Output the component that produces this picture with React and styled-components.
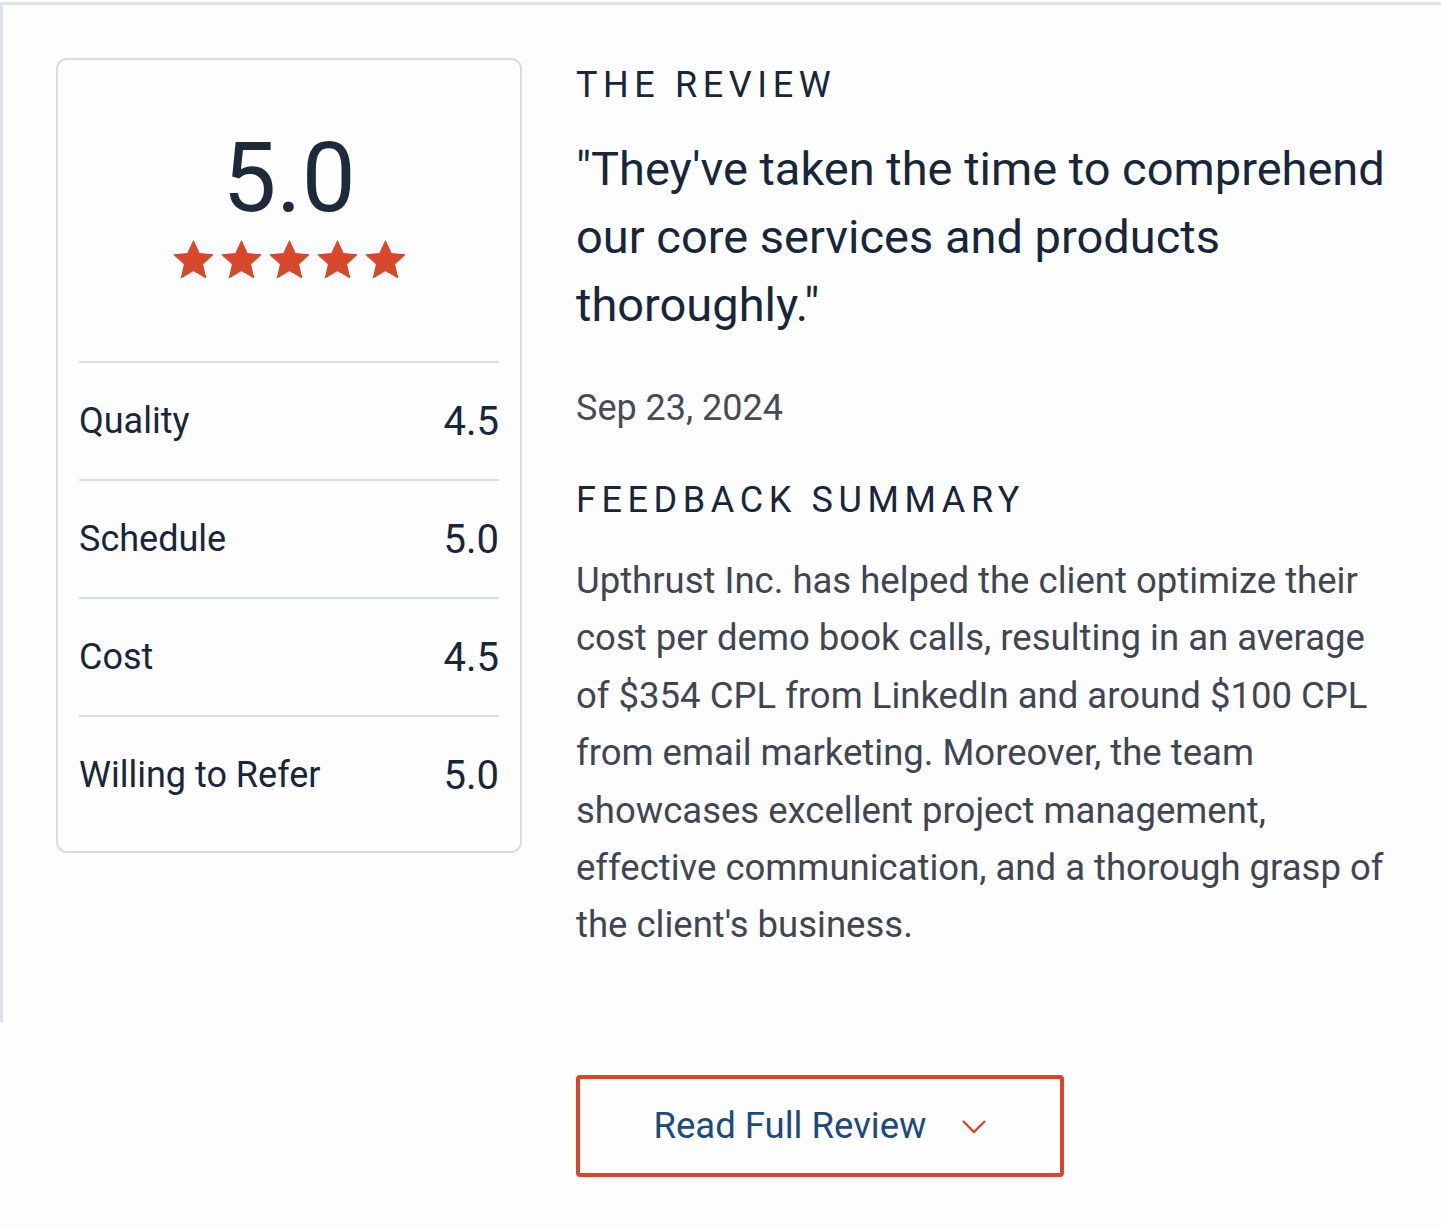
import React from 'react';
import styled, { createGlobalStyle } from 'styled-components';

const GlobalStyle = createGlobalStyle`
  body {
    margin: 0;
    background: #fdfdfe;
    font-family: Roboto, "Liberation Sans", Arial, sans-serif;
    color: #17263a;
  }
`;

const Page = styled.div`
  padding-top: 2px;
  width: 1441px;
  height: 1226px;
  box-sizing: border-box;
  overflow: hidden;
`;

const Panel = styled.section`
  display: grid;
  grid-template-columns: 466px 826px;
  column-gap: 54px;
  align-items: start;
  border-top: 3px solid #dce3eb;
  border-left: 3px solid #dce3eb;
  padding: 53px 0 68px 53px;
`;

const Card = styled.div`
  border: 2px solid #d3dde8;
  border-radius: 11px;
  padding: 0 21px 18px;
  background: #fdfdfe;
`;

const Overall = styled.div`
  display: flex;
  flex-direction: column;
  align-items: center;
  padding: 69px 0 79px;
`;

const Score = styled.div`
  font-size: 96px;
  line-height: 98px;
  font-weight: 400;
  color: #1c2a3b;
`;

const Stars = styled.div`
  display: flex;
  gap: 3px;
  margin-top: 11px;

  svg {
    width: 45px;
    height: 44px;
    display: block;
  }
`;

const Row = styled.div`
  display: flex;
  align-items: center;
  justify-content: space-between;
  height: 116px;
  border-top: 2px solid #d5dfe9;
`;

const Label = styled.span`
  font-size: 36px;
  color: #17263a;
`;

const Value = styled.span`
  font-size: 40px;
  color: #17263a;
`;

const Column = styled.div`
  display: flex;
  flex-direction: column;
  padding-top: 5px;
`;

const Eyebrow = styled.h3`
  margin: ${({ $top }) => $top || 0}px 0 0;
  font-size: 36px;
  line-height: 44px;
  font-weight: 400;
  letter-spacing: 5.6px;
  text-transform: uppercase;
  color: #17263a;
`;

const Quote = styled.p`
  margin: 28px 0 0;
  font-size: 47px;
  line-height: 68px;
  color: #17263a;
`;

const DateLine = styled.p`
  margin: 45px 0 0;
  font-size: 36px;
  line-height: 48px;
  color: #464c55;
`;

const Summary = styled.p`
  margin: 30px 0 0;
  font-size: 36.5px;
  line-height: 57.4px;
  color: #3f4652;
`;

const Footer = styled.div`
  display: grid;
  grid-template-columns: 466px 488px;
  column-gap: 54px;
  padding: 53px 0 0 56px;
`;

const ReadButton = styled.button`
  grid-column: 2;
  height: 102px;
  display: flex;
  align-items: center;
  justify-content: center;
  gap: 34px;
  border: 4px solid #d9452b;
  border-radius: 4px;
  background: #fdfdfe;
  font-family: inherit;
  font-size: 36.5px;
  color: #1d4a7e;
  cursor: pointer;

  svg {
    width: 26px;
    height: 16px;
    display: block;
  }
`;

const Star = () => (
  <svg viewBox="0 0 24 24">
    <path
      d="M12 1.6l3.1 6.9 7.4.7-5.6 5 1.7 7.4L12 17.8l-6.6 3.8 1.7-7.4-5.6-5 7.4-.7z"
      fill="#d6472b"
      stroke="#d6472b"
      strokeWidth="0.6"
      strokeLinejoin="round"
    />
  </svg>
);

const Chevron = () => (
  <svg viewBox="0 0 26 16">
    <path d="M2 3l11 11L24 3" fill="none" stroke="#d9452b" strokeWidth="2.4" />
  </svg>
);

const ratings = [
  { label: 'Quality', value: '4.5' },
  { label: 'Schedule', value: '5.0' },
  { label: 'Cost', value: '4.5' },
  { label: 'Willing to Refer', value: '5.0' },
];

const App = () => {
  return (
    <Page>
      <GlobalStyle />
      <Panel>
        <Card>
          <Overall>
            <Score>5.0</Score>
            <Stars>
              {[0, 1, 2, 3, 4].map((i) => (
                <Star key={i} />
              ))}
            </Stars>
          </Overall>
          {ratings.map((r) => (
            <Row key={r.label}>
              <Label>{r.label}</Label>
              <Value>{r.value}</Value>
            </Row>
          ))}
        </Card>

        <Column>
          <Eyebrow>The Review</Eyebrow>
          <Quote>
            "They've taken the time to comprehend our core services and products thoroughly."
          </Quote>
          <DateLine>Sep 23, 2024</DateLine>
          <Eyebrow $top={46}>Feedback Summary</Eyebrow>
          <Summary>
            Upthrust Inc. has helped the client optimize their cost per demo book calls, resulting
            in an average of $354 CPL from LinkedIn and around $100 CPL from email marketing.
            Moreover, the team showcases excellent project management, effective communication,
            and a thorough grasp of the client's business.
          </Summary>
        </Column>
      </Panel>

      <Footer>
        <ReadButton>
          Read Full Review
          <Chevron />
        </ReadButton>
      </Footer>
    </Page>
  );
};

export default App;
